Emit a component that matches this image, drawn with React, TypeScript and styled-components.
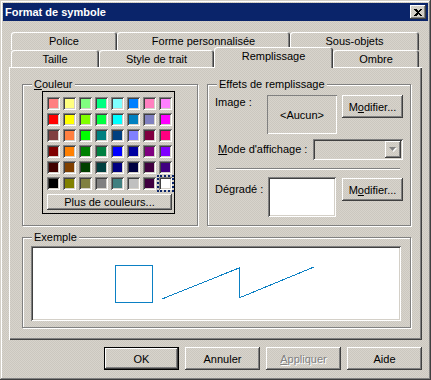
import { FC } from 'react';
import styled, { createGlobalStyle, css } from 'styled-components';

const GlobalStyle = createGlobalStyle`
  body {
    margin: 0;
    font-family: "Liberation Sans", Arial, sans-serif;
    font-size: 11px;
    color: #000;
  }
`;

const dither = css`
  background-color: #d4d0c8;
  background-image: repeating-conic-gradient(#d8d4cc 0 25%, #cbc7bf 0 50%);
  background-size: 2px 2px;
  background-attachment: fixed;
`;

const raised = css`
  box-shadow: inset -1px -1px #404040, inset 1px 1px #fff, inset -2px -2px #808080;
`;

const sunken = css`
  box-shadow: inset 1px 1px #808080, inset -1px -1px #fff, inset 2px 2px #404040, inset -2px -2px #d4d0c8;
`;

const Window = styled.div`
  width: 431px;
  height: 380px;
  box-sizing: border-box;
  padding: 3px;
  display: flex;
  flex-direction: column;
  ${dither}
  box-shadow: inset -1px -1px #404040, inset 1px 1px #d4d0c8, inset -2px -2px #808080, inset 2px 2px #fff;
`;

const TitleBar = styled.div`
  flex: none;
  height: 18px;
  display: flex;
  align-items: center;
  justify-content: space-between;
  padding: 0 2px;
  background: #0a246a;
  color: #fff;
  font-weight: bold;
`;

const CloseButton = styled.div`
  width: 16px;
  height: 14px;
  box-sizing: border-box;
  display: flex;
  align-items: center;
  justify-content: center;
  ${dither}
  ${raised}
`;

const Body = styled.div`
  flex: 1;
  display: flex;
  flex-direction: column;
  padding: 11px 6px 0;
`;

const TabRow = styled.div<{ $h: number }>`
  display: flex;
  height: ${(p) => p.$h}px;
  padding-left: 2px;
`;

const Tab = styled.div<{ $w: number; $active?: boolean }>`
  width: ${(p) => p.$w}px;
  height: 100%;
  box-sizing: border-box;
  display: flex;
  align-items: center;
  justify-content: center;
  border-radius: 3px 3px 0 0;
  box-shadow: inset 1px 1px #fff, inset -1px 0 #404040, inset -2px 0 #808080;
  ${(p) =>
    p.$active &&
    css`
      position: relative;
      z-index: 1;
      margin-top: -3px;
      height: calc(100% + 4px);
      padding-bottom: 3px;
      ${dither}
    `}
`;

const Panel = styled.div`
  height: 273px;
  box-sizing: border-box;
  padding: 17px 0 0 13px;
  box-shadow: inset 1px 1px #fff, inset -1px -1px #404040, inset -2px -2px #808080;
`;

const GroupRow = styled.div`
  display: flex;
  gap: 9px;
`;

const Group = styled.div<{ $w: number; $h: number }>`
  position: relative;
  width: ${(p) => p.$w}px;
  height: ${(p) => p.$h}px;
  box-sizing: border-box;
  border: 1px solid #808080;
  box-shadow: inset 1px 1px #fff, 1px 1px #fff;
`;

const Legend = styled.span`
  position: absolute;
  top: -7px;
  left: 9px;
  padding: 0 2px;
  line-height: 13px;
  ${dither}
`;

const ColorGroupBody = styled.div`
  padding: 6px 0 0 19px;
`;

const ColorBox = styled.div`
  width: 133px;
  height: 123px;
  box-sizing: border-box;
  border: 1px solid #000;
  padding: 5px 0 0 4px;
`;

const SwatchGrid = styled.div`
  display: grid;
  grid-template-columns: repeat(8, 13px);
  grid-auto-rows: 13px;
  gap: 3px;
`;

const Swatch = styled.div<{ $c: string; $sel?: boolean }>`
  background: ${(p) => p.$c};
  ${sunken}
  ${(p) =>
    p.$sel &&
    css`
      outline: 2px dotted #0a246a;
    `}
`;

const MoreButton = styled.div`
  width: 125px;
  height: 16px;
  margin-top: 4px;
  box-sizing: border-box;
  display: flex;
  align-items: center;
  justify-content: center;
  ${raised}
`;

const EffectsBody = styled.div`
  padding: 10px 7px 0;
  display: flex;
  flex-direction: column;
`;

const FieldRow = styled.div<{ $h: number; $top?: number }>`
  display: flex;
  align-items: flex-start;
  height: ${(p) => p.$h}px;
  margin-top: ${(p) => p.$top ?? 0}px;
`;

const Label = styled.div<{ $w?: number; $top?: number }>`
  width: ${(p) => (p.$w ? `${p.$w}px` : 'auto')};
  flex: ${(p) => (p.$w ? 'none' : '1')};
  padding-top: ${(p) => p.$top ?? 0}px;
  line-height: 13px;
  white-space: nowrap;
`;

const ImageBox = styled.div`
  width: 70px;
  height: 39px;
  display: flex;
  align-items: center;
  justify-content: center;
  box-shadow: inset 1px 1px #808080, inset -1px -1px #fff;
`;

const GradientBox = styled.div`
  width: 68px;
  height: 40px;
  background: #fff;
  ${sunken}
`;

const Button = styled.button<{ $w: number; $default?: boolean; $left?: number; $top?: number }>`
  width: ${(p) => p.$w}px;
  height: 23px;
  margin: ${(p) => p.$top ?? 0}px 0 0 ${(p) => p.$left ?? 0}px;
  padding: 0;
  box-sizing: border-box;
  font: inherit;
  color: #000;
  border: none;
  ${dither}
  ${raised}
  ${(p) =>
    p.$default &&
    css`
      border: 1px solid #000;
    `}
  &:disabled {
    color: #808080;
    text-shadow: 1px 1px #fff;
  }
`;

const Combo = styled.div`
  width: 90px;
  height: 21px;
  box-sizing: border-box;
  padding: 2px;
  display: flex;
  justify-content: flex-end;
  ${sunken}
`;

const ComboArrow = styled.div`
  width: 16px;
  height: 17px;
  box-sizing: border-box;
  display: flex;
  align-items: center;
  justify-content: center;
  ${raised}
`;

const Separator = styled.div`
  width: 184px;
  height: 0;
  margin: 8px 0 0 1px;
  border-top: 1px solid #808080;
  border-bottom: 1px solid #fff;
`;

const ExampleGroupBody = styled.div`
  padding: 8px 0 0 8px;
`;

const Preview = styled.div`
  width: 370px;
  height: 75px;
  background: #fff;
  ${sunken}
  svg {
    display: block;
  }
`;

const ExampleWrap = styled.div`
  margin-top: 11px;
`;

const Footer = styled.div`
  display: flex;
  justify-content: flex-end;
  gap: 6px;
  margin-top: 7px;
`;

const palette = [
  '#ff8080', '#ffff80', '#80ff80', '#00ff80', '#80ffff', '#0080ff', '#ff80c0', '#ff80ff',
  '#ff0000', '#ffff00', '#80ff00', '#00ff40', '#00ffff', '#0080c0', '#8080c0', '#ff00ff',
  '#804040', '#ff8040', '#00ff00', '#008080', '#004080', '#8080ff', '#800040', '#ff0080',
  '#800000', '#ff8000', '#008000', '#008040', '#0000ff', '#0000a0', '#800080', '#8000ff',
  '#400000', '#804000', '#004000', '#004040', '#000080', '#000040', '#400040', '#400080',
  '#000000', '#808000', '#808040', '#808080', '#408080', '#c0c0c0', '#400040', '#ffffff',
];

const backTabs = [
  { label: 'Police', w: 106 },
  { label: 'Forme personnalisée', w: 173 },
  { label: 'Sous-objets', w: 129 },
];

const frontTabs = [
  { label: 'Taille', w: 88 },
  { label: 'Style de trait', w: 115 },
  { label: 'Remplissage', w: 119, active: true },
  { label: 'Ombre', w: 86 },
];

const Modify: FC<{ left: number; top?: number }> = ({ left, top }) => (
  <Button $w={61} $left={left} $top={top}>
    M<u>o</u>difier...
  </Button>
);

export default function App() {
  return (
    <>
      <GlobalStyle />
      <Window>
        <TitleBar>
          <span>Format de symbole</span>
          <CloseButton>
            <svg width="8" height="7" viewBox="0 0 8 7">
              <path d="M0 0h2l2 2 2-2h2L5 3.5 8 7H6L4 5 2 7H0l3-3.5z" fill="#000" shapeRendering="crispEdges" />
            </svg>
          </CloseButton>
        </TitleBar>
        <Body>
          <TabRow $h={18}>
            {backTabs.map((t) => (
              <Tab key={t.label} $w={t.w}>
                {t.label}
              </Tab>
            ))}
          </TabRow>
          <TabRow $h={17}>
            {frontTabs.map((t) => (
              <Tab key={t.label} $w={t.w} $active={t.active}>
                {t.label}
              </Tab>
            ))}
          </TabRow>
          <Panel>
            <GroupRow>
              <Group $w={176} $h={142}>
                <Legend>
                  <u>C</u>ouleur
                </Legend>
                <ColorGroupBody>
                  <ColorBox>
                    <SwatchGrid>
                      {palette.map((c, i) => (
                        <Swatch key={i} $c={c} $sel={i === palette.length - 1} />
                      ))}
                    </SwatchGrid>
                    <MoreButton>Plus de couleurs...</MoreButton>
                  </ColorBox>
                </ColorGroupBody>
              </Group>
              <Group $w={204} $h={142}>
                <Legend>Effets de remplissage</Legend>
                <EffectsBody>
                  <FieldRow $h={39}>
                    <Label $w={52} $top={1}>
                      Image :
                    </Label>
                    <ImageBox>&lt;Aucun&gt;</ImageBox>
                    <Modify left={5} />
                  </FieldRow>
                  <FieldRow $h={21} $top={5}>
                    <Label $top={4}>
                      &nbsp;<u>M</u>ode d'affichage :
                    </Label>
                    <Combo>
                      <ComboArrow>
                        <svg width="8" height="5" viewBox="0 0 8 5">
                          <path d="M1 1h7L4.5 5z" fill="#fff" />
                          <path d="M0 0h7L3.5 4z" fill="#808080" />
                        </svg>
                      </ComboArrow>
                    </Combo>
                  </FieldRow>
                  <Separator />
                  <FieldRow $h={40} $top={7}>
                    <Label $w={53} $top={6}>
                      Dégradé :
                    </Label>
                    <GradientBox />
                    <Modify left={6} top={1} />
                  </FieldRow>
                </EffectsBody>
              </Group>
            </GroupRow>
            <ExampleWrap>
              <Group $w={389} $h={91}>
                <Legend>Exemple</Legend>
                <ExampleGroupBody>
                  <Preview>
                    <svg width="370" height="75" viewBox="0 0 370 75">
                      <g fill="none" stroke="#0b80c4" strokeWidth="1" shapeRendering="crispEdges">
                        <rect x="84.5" y="19.5" width="37" height="37" />
                        <polyline points="131,53 208,22 208,52 283,21" />
                      </g>
                    </svg>
                  </Preview>
                </ExampleGroupBody>
              </Group>
            </ExampleWrap>
          </Panel>
          <Footer>
            <Button $w={75} $default>
              OK
            </Button>
            <Button $w={75}>Annuler</Button>
            <Button $w={75} disabled>
              <u>A</u>ppliquer
            </Button>
            <Button $w={75}>Aide</Button>
          </Footer>
        </Body>
      </Window>
    </>
  );
}
